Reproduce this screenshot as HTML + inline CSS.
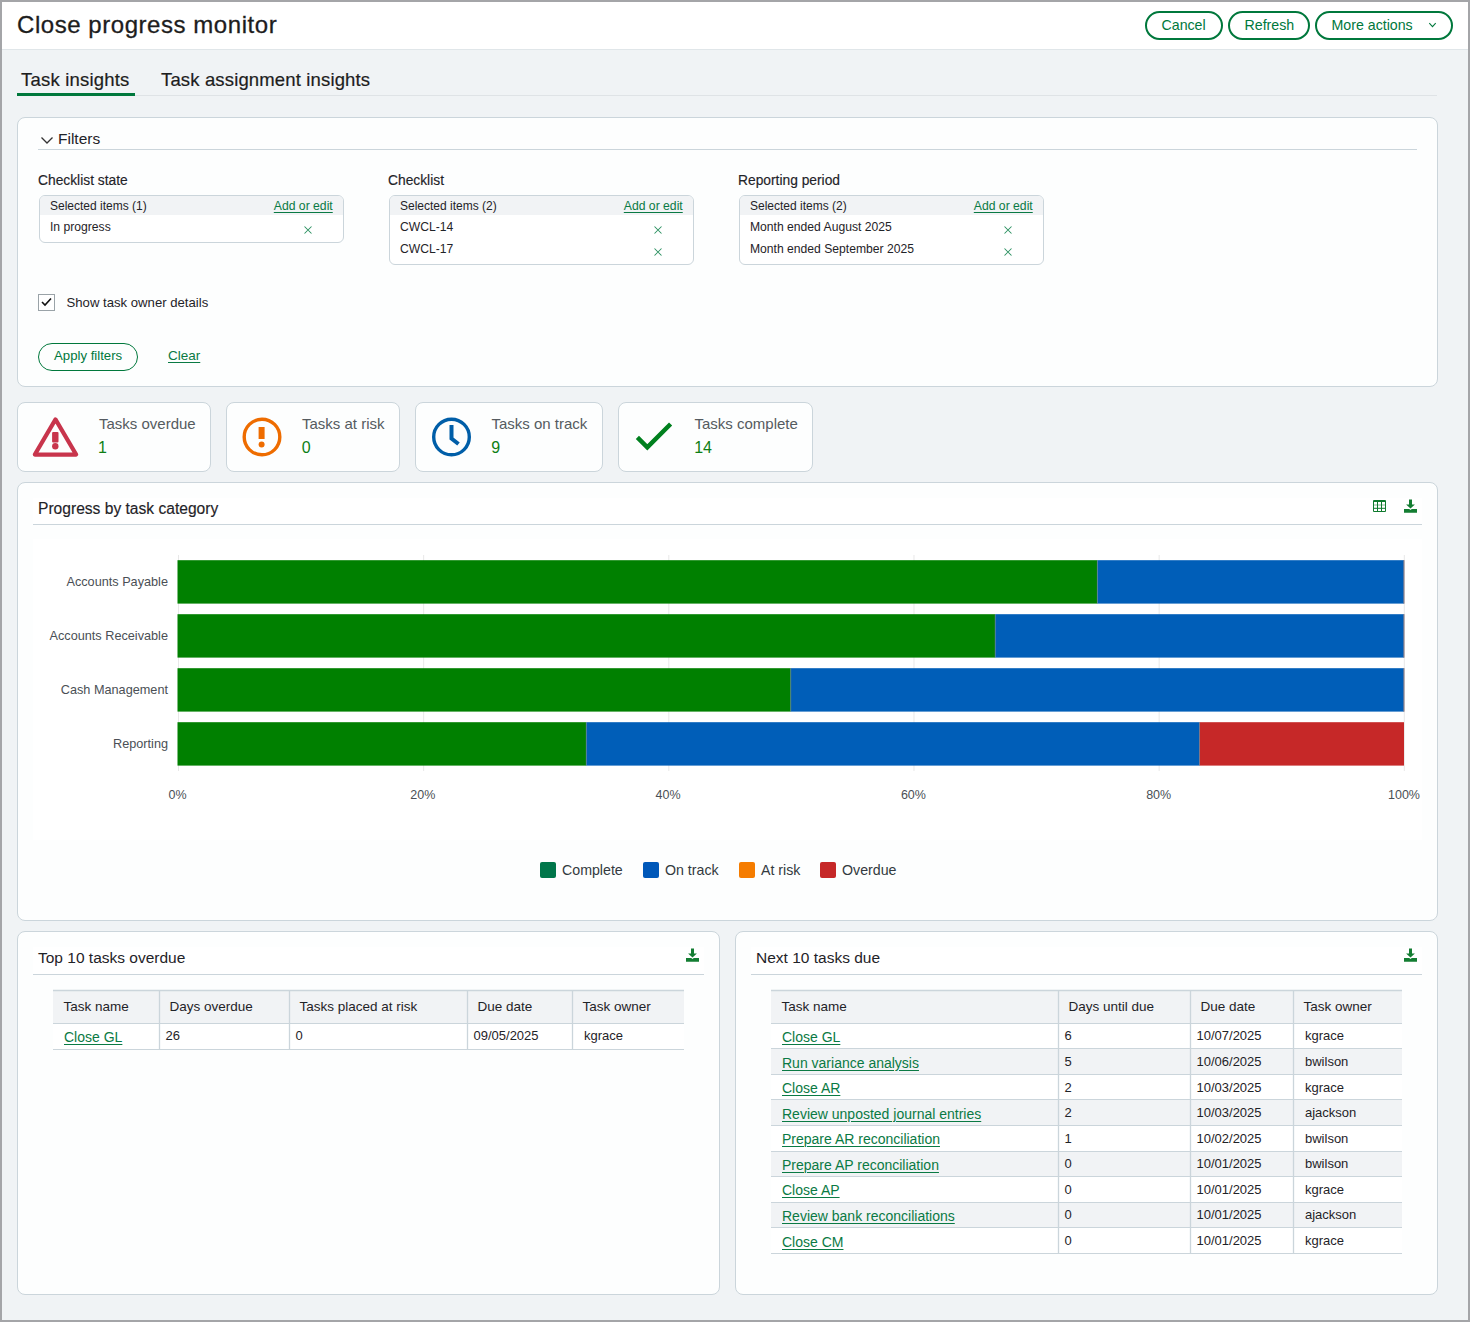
<!DOCTYPE html>
<html><head><meta charset="utf-8"><style>
*{box-sizing:border-box;margin:0;padding:0}
html,body{width:1470px;height:1322px;overflow:hidden}
body{font-family:"Liberation Sans",sans-serif;background:#f0f3f5;position:relative;color:#1f2328}
#frame{position:absolute;left:0;top:0;width:1470px;height:1322px;border:2px solid #a4a5a8;z-index:50}
.a{position:absolute}
.t{position:absolute;white-space:nowrap;line-height:1}
.u{position:absolute;white-space:nowrap;line-height:1;text-decoration:underline;text-underline-offset:2px;text-decoration-thickness:1px}
svg{position:absolute;overflow:visible}
</style></head><body>
<div id="frame"></div>
<div class="a" style="left:2px;top:2px;width:1466px;height:48px;background:#fff;border-bottom:1px solid #e0e6e9"></div>
<div class="t" style="left:17px;top:12.88px;font-size:24px;color:#1d1d1d;letter-spacing:0.55px;-webkit-text-stroke:0.3px #1d1d1d">Close progress monitor</div>
<div class="a" style="left:1145px;top:11px;width:78px;height:29px;border:2px solid #00783c;border-radius:15px;background:#fff"></div>
<div class="t" style="left:1161.5px;top:18.28px;font-size:14.2px;color:#00783c;">Cancel</div>
<div class="a" style="left:1228px;top:11px;width:82px;height:29px;border:2px solid #00783c;border-radius:15px;background:#fff"></div>
<div class="t" style="left:1244.5px;top:18.28px;font-size:14.2px;color:#00783c;">Refresh</div>
<div class="a" style="left:1315px;top:11px;width:138px;height:29px;border:2px solid #00783c;border-radius:15px;background:#fff"></div>
<div class="t" style="left:1331.5px;top:18.28px;font-size:14.2px;color:#00783c;">More actions</div>
<svg style="left:1428px;top:22px" width="9" height="6"><polyline points="1.3,1.2 4.5,4.6 7.7,1.2" fill="none" stroke="#00783c" stroke-width="1.1"/></svg>
<div class="t" style="left:21px;top:70.84px;font-size:18.5px;color:#1d1d1d;letter-spacing:0.2px;-webkit-text-stroke:0.2px #1d1d1d">Task insights</div>
<div class="t" style="left:161px;top:70.84px;font-size:18.5px;color:#1d1d1d;letter-spacing:0.15px;-webkit-text-stroke:0.2px #1d1d1d">Task assignment insights</div>
<div class="a" style="left:17px;top:95px;width:1420px;height:1px;background:#dfe3e6"></div>
<div class="a" style="left:17px;top:93px;width:118px;height:3px;background:#00783c"></div>
<div class="a" style="left:17px;top:117px;width:1421px;height:270px;background:#fdfefe;border:1px solid #cbd5db;border-radius:8px"></div>
<svg style="left:40px;top:136px" width="14" height="9"><polyline points="1.5,1.5 7,7 12.5,1.5" fill="none" stroke="#333" stroke-width="1.3"/></svg>
<div class="t" style="left:58px;top:130.78px;font-size:15.5px;color:#1f2328;">Filters</div>
<div class="a" style="left:38px;top:149px;width:1379px;height:1px;background:#cbd5db"></div>
<div class="t" style="left:38px;top:173.92px;font-size:13.8px;color:#1f2328;-webkit-text-stroke:0.15px #1f2328">Checklist state</div>
<div class="a" style="left:39px;top:195px;width:305px;height:48px;border:1px solid #cbd5db;border-radius:6px;background:#fff;overflow:hidden"></div>
<div class="a" style="left:40px;top:196px;width:303px;height:19px;background:#f1f3f5;border-radius:5px 5px 0 0"></div>
<div class="t" style="left:50px;top:199.84px;font-size:12px;color:#1f2328;">Selected items (1)</div>
<div class="u" style="left:273.8px;top:199.97px;font-size:12.2px;color:#0a7a44;">Add or edit</div>
<div class="t" style="left:50px;top:220.72px;font-size:12.15px;color:#1f2328;">In progress</div>
<svg style="left:303.5px;top:226.3px" width="8" height="8"><path d="M0.5,0.5 L7.5,7.5 M7.5,0.5 L0.5,7.5" stroke="#2a9060" stroke-width="1.05"/></svg>
<div class="t" style="left:388px;top:173.92px;font-size:13.8px;color:#1f2328;-webkit-text-stroke:0.15px #1f2328">Checklist</div>
<div class="a" style="left:389px;top:195px;width:305px;height:70px;border:1px solid #cbd5db;border-radius:6px;background:#fff;overflow:hidden"></div>
<div class="a" style="left:390px;top:196px;width:303px;height:19px;background:#f1f3f5;border-radius:5px 5px 0 0"></div>
<div class="t" style="left:400px;top:199.84px;font-size:12px;color:#1f2328;">Selected items (2)</div>
<div class="u" style="left:623.8px;top:199.97px;font-size:12.2px;color:#0a7a44;">Add or edit</div>
<div class="t" style="left:400px;top:220.72px;font-size:12.15px;color:#1f2328;">CWCL-14</div>
<svg style="left:653.5px;top:226.3px" width="8" height="8"><path d="M0.5,0.5 L7.5,7.5 M7.5,0.5 L0.5,7.5" stroke="#2a9060" stroke-width="1.05"/></svg>
<div class="t" style="left:400px;top:242.72px;font-size:12.15px;color:#1f2328;">CWCL-17</div>
<svg style="left:653.5px;top:248.4px" width="8" height="8"><path d="M0.5,0.5 L7.5,7.5 M7.5,0.5 L0.5,7.5" stroke="#2a9060" stroke-width="1.05"/></svg>
<div class="t" style="left:738px;top:173.92px;font-size:13.8px;color:#1f2328;-webkit-text-stroke:0.15px #1f2328">Reporting period</div>
<div class="a" style="left:739px;top:195px;width:305px;height:70px;border:1px solid #cbd5db;border-radius:6px;background:#fff;overflow:hidden"></div>
<div class="a" style="left:740px;top:196px;width:303px;height:19px;background:#f1f3f5;border-radius:5px 5px 0 0"></div>
<div class="t" style="left:750px;top:199.84px;font-size:12px;color:#1f2328;">Selected items (2)</div>
<div class="u" style="left:973.8px;top:199.97px;font-size:12.2px;color:#0a7a44;">Add or edit</div>
<div class="t" style="left:750px;top:220.72px;font-size:12.15px;color:#1f2328;">Month ended August 2025</div>
<svg style="left:1003.5px;top:226.3px" width="8" height="8"><path d="M0.5,0.5 L7.5,7.5 M7.5,0.5 L0.5,7.5" stroke="#2a9060" stroke-width="1.05"/></svg>
<div class="t" style="left:750px;top:242.72px;font-size:12.15px;color:#1f2328;">Month ended September 2025</div>
<svg style="left:1003.5px;top:248.4px" width="8" height="8"><path d="M0.5,0.5 L7.5,7.5 M7.5,0.5 L0.5,7.5" stroke="#2a9060" stroke-width="1.05"/></svg>
<div class="a" style="left:38px;top:294px;width:17px;height:17px;border:1px solid #9aa3a8;background:#fff"></div>
<svg style="left:41px;top:297px" width="11" height="10"><polyline points="1,5 4,8 10,1.5" fill="none" stroke="#111" stroke-width="1.6"/></svg>
<div class="t" style="left:66.5px;top:295.67px;font-size:13.15px;color:#1f2328;">Show task owner details</div>
<div class="a" style="left:38px;top:343px;width:100px;height:28px;border:1px solid #00783c;border-radius:14px"></div>
<div class="t" style="left:54px;top:349.33px;font-size:13.2px;color:#00783c;">Apply filters</div>
<div class="u" style="left:168px;top:349.07px;font-size:13.5px;color:#0a7a44;">Clear</div>
<div class="a" style="left:17px;top:402px;width:194px;height:70px;background:#fdfefe;border:1px solid #cbd5db;border-radius:8px"></div>
<div class="t" style="left:99px;top:416.00px;font-size:15px;color:#555b60;">Tasks overdue</div>
<div class="t" style="left:98px;top:440.16px;font-size:16px;color:#0e7f14;">1</div>
<div class="a" style="left:226px;top:402px;width:174px;height:70px;background:#fdfefe;border:1px solid #cbd5db;border-radius:8px"></div>
<div class="t" style="left:302px;top:416.00px;font-size:15px;color:#555b60;">Tasks at risk</div>
<div class="t" style="left:301.7px;top:440.16px;font-size:16px;color:#0e7f14;">0</div>
<div class="a" style="left:415px;top:402px;width:188px;height:70px;background:#fdfefe;border:1px solid #cbd5db;border-radius:8px"></div>
<div class="t" style="left:491.5px;top:416.00px;font-size:15px;color:#555b60;">Tasks on track</div>
<div class="t" style="left:491.2px;top:440.16px;font-size:16px;color:#0e7f14;">9</div>
<div class="a" style="left:618px;top:402px;width:195px;height:70px;background:#fdfefe;border:1px solid #cbd5db;border-radius:8px"></div>
<div class="t" style="left:694.5px;top:416.00px;font-size:15px;color:#555b60;">Tasks complete</div>
<div class="t" style="left:694.2px;top:440.16px;font-size:16px;color:#0e7f14;">14</div>
<svg style="left:0;top:0" width="1" height="1"><path d="M55.5,419.4 L76.2,454.6 L34.8,454.6 Z" fill="none" stroke="#c8354c" stroke-width="4.1" stroke-linejoin="round"/><rect x="52.1" y="432" width="6.4" height="10.6" rx="1" fill="#c8354c"/><circle cx="55.3" cy="446.2" r="3.2" fill="#c8354c"/></svg>
<svg style="left:0;top:0" width="1" height="1"><circle cx="262" cy="437" r="17.8" fill="none" stroke="#ee6c00" stroke-width="3.4"/><rect x="258.6" y="427" width="6" height="12" fill="#ee6c00"/><circle cx="261.6" cy="444.5" r="3" fill="#ee6c00"/></svg>
<svg style="left:0;top:0" width="1" height="1"><circle cx="451.5" cy="437" r="17.8" fill="none" stroke="#005ea8" stroke-width="3.4"/><polyline points="451.5,425 451.5,438.5 458.5,444" fill="none" stroke="#005ea8" stroke-width="4"/></svg>
<svg style="left:0;top:0" width="1" height="1"><polyline points="637.4,437.4 647.3,447.3 670.6,424" fill="none" stroke="#00801e" stroke-width="4.5"/></svg>
<div class="a" style="left:17px;top:482px;width:1421px;height:439px;background:#fdfefe;border:1px solid #cbd5db;border-radius:8px"></div>
<div class="a" style="left:33px;top:498px;width:1389px;height:26px;background:#fff"></div>
<div class="t" style="left:38px;top:500.99px;font-size:15.6px;color:#1f2328;-webkit-text-stroke:0.15px #1f2328">Progress by task category</div>
<div class="a" style="left:33px;top:524px;width:1389px;height:1px;background:#cbd5db"></div>
<div class="a" style="left:33px;top:539px;width:1389px;height:301px;background:#fff"></div>
<svg style="left:1373px;top:500px" width="13" height="12"><g fill="#0f7a2e"><rect x="0.5" y="0" width="12" height="2"/><rect x="0.5" y="11" width="12" height="1"/><rect x="0" y="0.5" width="1" height="11"/><rect x="12" y="0.5" width="1" height="11"/><rect x="4" y="0" width="1" height="12"/><rect x="8" y="0" width="1" height="12"/><rect x="0" y="7.8" width="13" height="1"/></g><rect x="0" y="4.5" width="13" height="1" fill="#0f7a2e" opacity="0.55"/></svg>
<svg style="left:1404px;top:499px" width="13" height="14"><path d="M5,0.5 H8 V5.6 H10.9 L6.5,9.6 L2.1,5.6 H5 Z" fill="#137d32"/><path d="M0,9.9 H5.2 L6.5,10.9 L7.8,9.9 H13 V13.8 H0 Z" fill="#137d32"/></svg>
<svg style="left:0;top:0" width="1" height="1"><line x1="178.5" y1="555" x2="178.5" y2="771" stroke="#e8e8e8" stroke-width="1"/><line x1="423.65999999999997" y1="555" x2="423.65999999999997" y2="771" stroke="#e8e8e8" stroke-width="1"/><line x1="668.8199999999999" y1="555" x2="668.8199999999999" y2="771" stroke="#e8e8e8" stroke-width="1"/><line x1="913.98" y1="555" x2="913.98" y2="771" stroke="#e8e8e8" stroke-width="1"/><line x1="1159.1399999999999" y1="555" x2="1159.1399999999999" y2="771" stroke="#e8e8e8" stroke-width="1"/><line x1="1404.3" y1="555" x2="1404.3" y2="771" stroke="#e8e8e8" stroke-width="1"/><rect x="177.5" y="560.2" width="919.875" height="43.4" fill="#008000"/><rect x="1097.375" y="560.2" width="306.625" height="43.4" fill="#005eb8"/><line x1="1404.0" y1="560.2" x2="1404.0" y2="603.6" stroke="#c98f8f" stroke-width="0.8"/><line x1="1097.375" y1="560.2" x2="1097.375" y2="603.6" stroke="#6b7f8a" stroke-width="0.6"/><line x1="1404.0" y1="560.2" x2="1404.0" y2="603.6" stroke="#6b7f8a" stroke-width="0.6"/><rect x="177.5" y="614.2" width="817.7075500000001" height="43.4" fill="#008000"/><rect x="995.2075500000001" y="614.2" width="408.79245" height="43.4" fill="#005eb8"/><line x1="1404.0" y1="614.2" x2="1404.0" y2="657.6" stroke="#c98f8f" stroke-width="0.8"/><line x1="995.2075500000001" y1="614.2" x2="995.2075500000001" y2="657.6" stroke="#6b7f8a" stroke-width="0.6"/><line x1="1404.0" y1="614.2" x2="1404.0" y2="657.6" stroke="#6b7f8a" stroke-width="0.6"/><rect x="177.5" y="668.2" width="613.25" height="43.4" fill="#008000"/><rect x="790.75" y="668.2" width="613.25" height="43.4" fill="#005eb8"/><line x1="1404.0" y1="668.2" x2="1404.0" y2="711.6" stroke="#c98f8f" stroke-width="0.8"/><line x1="790.75" y1="668.2" x2="790.75" y2="711.6" stroke="#6b7f8a" stroke-width="0.6"/><line x1="1404.0" y1="668.2" x2="1404.0" y2="711.6" stroke="#6b7f8a" stroke-width="0.6"/><rect x="177.5" y="722.2" width="408.79245" height="43.4" fill="#008000"/><rect x="586.2924499999999" y="722.2" width="613.25" height="43.4" fill="#005eb8"/><rect x="1199.54245" y="722.2" width="204.45755000000003" height="43.4" fill="#c62828"/><line x1="586.2924499999999" y1="722.2" x2="586.2924499999999" y2="765.6" stroke="#6b7f8a" stroke-width="0.6"/><line x1="1199.54245" y1="722.2" x2="1199.54245" y2="765.6" stroke="#6b7f8a" stroke-width="0.6"/></svg>
<div class="t" style="right:1302px;top:575.72px;font-size:12.7px;color:#4a4f55">Accounts Payable</div>
<div class="t" style="right:1302px;top:629.72px;font-size:12.7px;color:#4a4f55">Accounts Receivable</div>
<div class="t" style="right:1302px;top:683.72px;font-size:12.7px;color:#4a4f55">Cash Management</div>
<div class="t" style="right:1302px;top:737.72px;font-size:12.7px;color:#4a4f55">Reporting</div>
<div class="t" style="left:137.5px;width:80px;text-align:center;top:788.92px;font-size:12.5px;color:#4a4f55">0%</div>
<div class="t" style="left:382.8px;width:80px;text-align:center;top:788.92px;font-size:12.5px;color:#4a4f55">20%</div>
<div class="t" style="left:628.1px;width:80px;text-align:center;top:788.92px;font-size:12.5px;color:#4a4f55">40%</div>
<div class="t" style="left:873.4000000000001px;width:80px;text-align:center;top:788.92px;font-size:12.5px;color:#4a4f55">60%</div>
<div class="t" style="left:1118.7px;width:80px;text-align:center;top:788.92px;font-size:12.5px;color:#4a4f55">80%</div>
<div class="t" style="left:1364.0px;width:80px;text-align:center;top:788.92px;font-size:12.5px;color:#4a4f55">100%</div>
<div class="a" style="left:540px;top:862px;width:16px;height:16px;background:#00764a;border-radius:2px"></div>
<div class="t" style="left:562px;top:862.88px;font-size:14.2px;color:#333a40;">Complete</div>
<div class="a" style="left:643px;top:862px;width:16px;height:16px;background:#0058b9;border-radius:2px"></div>
<div class="t" style="left:665px;top:862.88px;font-size:14.2px;color:#333a40;">On track</div>
<div class="a" style="left:739px;top:862px;width:16px;height:16px;background:#f57c00;border-radius:2px"></div>
<div class="t" style="left:761px;top:862.88px;font-size:14.2px;color:#333a40;">At risk</div>
<div class="a" style="left:820px;top:862px;width:16px;height:16px;background:#c62828;border-radius:2px"></div>
<div class="t" style="left:842px;top:862.88px;font-size:14.2px;color:#333a40;">Overdue</div>
<div class="a" style="left:17px;top:931px;width:703px;height:364px;background:#fdfefe;border:1px solid #cbd5db;border-radius:8px"></div>
<div class="a" style="left:33px;top:947px;width:671px;height:27px;background:#fff"></div>
<div class="t" style="left:38px;top:949.78px;font-size:15.5px;color:#1f2328;">Top 10 tasks overdue</div>
<div class="a" style="left:33px;top:974px;width:671px;height:1px;background:#cbd5db"></div>
<svg style="left:686px;top:948px" width="13" height="14"><path d="M5,0.5 H8 V5.6 H10.9 L6.5,9.6 L2.1,5.6 H5 Z" fill="#137d32"/><path d="M0,9.9 H5.2 L6.5,10.9 L7.8,9.9 H13 V13.8 H0 Z" fill="#137d32"/></svg>
<div class="a" style="left:735px;top:931px;width:703px;height:364px;background:#fdfefe;border:1px solid #cbd5db;border-radius:8px"></div>
<div class="a" style="left:751px;top:947px;width:671px;height:27px;background:#fff"></div>
<div class="t" style="left:756px;top:949.78px;font-size:15.5px;color:#1f2328;">Next 10 tasks due</div>
<div class="a" style="left:751px;top:974px;width:671px;height:1px;background:#cbd5db"></div>
<svg style="left:1404px;top:948px" width="13" height="14"><path d="M5,0.5 H8 V5.6 H10.9 L6.5,9.6 L2.1,5.6 H5 Z" fill="#137d32"/><path d="M0,9.9 H5.2 L6.5,10.9 L7.8,9.9 H13 V13.8 H0 Z" fill="#137d32"/></svg>
<svg style="left:0;top:0" width="1" height="1"><rect x="53" y="990" width="631" height="33.200000000000045" fill="#f1f3f5"/><rect x="53" y="1023.2" width="631" height="26.3" fill="#ffffff"/><line x1="53" y1="990.5" x2="684" y2="990.5" stroke="#cbd5db" stroke-width="1.3"/><line x1="53" y1="1023.5" x2="684" y2="1023.5" stroke="#cbd5db" stroke-width="1.2"/><line x1="53" y1="1049.5" x2="684" y2="1049.5" stroke="#cbd5db" stroke-width="1.2"/><line x1="159.5" y1="990" x2="159.5" y2="1049.5" stroke="#cbd5db" stroke-width="1.3"/><line x1="289.5" y1="990" x2="289.5" y2="1049.5" stroke="#cbd5db" stroke-width="1.3"/><line x1="467.5" y1="990" x2="467.5" y2="1049.5" stroke="#cbd5db" stroke-width="1.3"/><line x1="572.5" y1="990" x2="572.5" y2="1049.5" stroke="#cbd5db" stroke-width="1.3"/></svg>
<div class="t" style="left:63.5px;top:1000.47px;font-size:13.5px;color:#1f2328;">Task name</div>
<div class="t" style="left:169.5px;top:1000.47px;font-size:13.5px;color:#1f2328;">Days overdue</div>
<div class="t" style="left:299.5px;top:1000.47px;font-size:13.5px;color:#1f2328;">Tasks placed at risk</div>
<div class="t" style="left:477.5px;top:1000.47px;font-size:13.5px;color:#1f2328;">Due date</div>
<div class="t" style="left:582.5px;top:1000.47px;font-size:13.5px;color:#1f2328;">Task owner</div>
<div class="u" style="left:64px;top:1030.05px;font-size:14px;color:#0a7a44;">Close GL</div>
<div class="t" style="left:165.5px;top:1029.40px;font-size:13px;color:#1f2328;">26</div>
<div class="t" style="left:295.5px;top:1029.40px;font-size:13px;color:#1f2328;">0</div>
<div class="t" style="left:473.5px;top:1029.40px;font-size:13px;color:#1f2328;">09/05/2025</div>
<div class="t" style="left:584px;top:1029.40px;font-size:13px;color:#1f2328;">kgrace</div>
<svg style="left:0;top:0" width="1" height="1"><rect x="771" y="990" width="631" height="33.200000000000045" fill="#f1f3f5"/><rect x="771" y="1023.2" width="631" height="25.56" fill="#ffffff"/><rect x="771" y="1048.76" width="631" height="25.56" fill="#f1f3f5"/><rect x="771" y="1074.32" width="631" height="25.56" fill="#ffffff"/><rect x="771" y="1099.88" width="631" height="25.56" fill="#f1f3f5"/><rect x="771" y="1125.44" width="631" height="25.56" fill="#ffffff"/><rect x="771" y="1151.0" width="631" height="25.56" fill="#f1f3f5"/><rect x="771" y="1176.56" width="631" height="25.56" fill="#ffffff"/><rect x="771" y="1202.1200000000001" width="631" height="25.56" fill="#f1f3f5"/><rect x="771" y="1227.68" width="631" height="25.56" fill="#ffffff"/><line x1="771" y1="990.5" x2="1402" y2="990.5" stroke="#cbd5db" stroke-width="1.3"/><line x1="771" y1="1023.5" x2="1402" y2="1023.5" stroke="#cbd5db" stroke-width="1.2"/><line x1="771" y1="1048.5" x2="1402" y2="1048.5" stroke="#cbd5db" stroke-width="1.2"/><line x1="771" y1="1074.5" x2="1402" y2="1074.5" stroke="#cbd5db" stroke-width="1.2"/><line x1="771" y1="1099.5" x2="1402" y2="1099.5" stroke="#cbd5db" stroke-width="1.2"/><line x1="771" y1="1125.5" x2="1402" y2="1125.5" stroke="#cbd5db" stroke-width="1.2"/><line x1="771" y1="1151.5" x2="1402" y2="1151.5" stroke="#cbd5db" stroke-width="1.2"/><line x1="771" y1="1176.5" x2="1402" y2="1176.5" stroke="#cbd5db" stroke-width="1.2"/><line x1="771" y1="1202.5" x2="1402" y2="1202.5" stroke="#cbd5db" stroke-width="1.2"/><line x1="771" y1="1227.5" x2="1402" y2="1227.5" stroke="#cbd5db" stroke-width="1.2"/><line x1="771" y1="1253.5" x2="1402" y2="1253.5" stroke="#cbd5db" stroke-width="1.2"/><line x1="1058.5" y1="990" x2="1058.5" y2="1253.24" stroke="#cbd5db" stroke-width="1.3"/><line x1="1190.5" y1="990" x2="1190.5" y2="1253.24" stroke="#cbd5db" stroke-width="1.3"/><line x1="1293.5" y1="990" x2="1293.5" y2="1253.24" stroke="#cbd5db" stroke-width="1.3"/></svg>
<div class="t" style="left:781.5px;top:1000.47px;font-size:13.5px;color:#1f2328;">Task name</div>
<div class="t" style="left:1068.5px;top:1000.47px;font-size:13.5px;color:#1f2328;">Days until due</div>
<div class="t" style="left:1200.5px;top:1000.47px;font-size:13.5px;color:#1f2328;">Due date</div>
<div class="t" style="left:1303.5px;top:1000.47px;font-size:13.5px;color:#1f2328;">Task owner</div>
<div class="u" style="left:782px;top:1030.05px;font-size:14px;color:#0a7a44;">Close GL</div>
<div class="t" style="left:1064.5px;top:1029.40px;font-size:13px;color:#1f2328;">6</div>
<div class="t" style="left:1196.5px;top:1029.40px;font-size:13px;color:#1f2328;">10/07/2025</div>
<div class="t" style="left:1305px;top:1029.40px;font-size:13px;color:#1f2328;">kgrace</div>
<div class="u" style="left:782px;top:1055.61px;font-size:14px;color:#0a7a44;">Run variance analysis</div>
<div class="t" style="left:1064.5px;top:1054.96px;font-size:13px;color:#1f2328;">5</div>
<div class="t" style="left:1196.5px;top:1054.96px;font-size:13px;color:#1f2328;">10/06/2025</div>
<div class="t" style="left:1305px;top:1054.96px;font-size:13px;color:#1f2328;">bwilson</div>
<div class="u" style="left:782px;top:1081.17px;font-size:14px;color:#0a7a44;">Close AR</div>
<div class="t" style="left:1064.5px;top:1080.52px;font-size:13px;color:#1f2328;">2</div>
<div class="t" style="left:1196.5px;top:1080.52px;font-size:13px;color:#1f2328;">10/03/2025</div>
<div class="t" style="left:1305px;top:1080.52px;font-size:13px;color:#1f2328;">kgrace</div>
<div class="u" style="left:782px;top:1106.73px;font-size:14px;color:#0a7a44;">Review unposted journal entries</div>
<div class="t" style="left:1064.5px;top:1106.08px;font-size:13px;color:#1f2328;">2</div>
<div class="t" style="left:1196.5px;top:1106.08px;font-size:13px;color:#1f2328;">10/03/2025</div>
<div class="t" style="left:1305px;top:1106.08px;font-size:13px;color:#1f2328;">ajackson</div>
<div class="u" style="left:782px;top:1132.29px;font-size:14px;color:#0a7a44;">Prepare AR reconciliation</div>
<div class="t" style="left:1064.5px;top:1131.64px;font-size:13px;color:#1f2328;">1</div>
<div class="t" style="left:1196.5px;top:1131.64px;font-size:13px;color:#1f2328;">10/02/2025</div>
<div class="t" style="left:1305px;top:1131.64px;font-size:13px;color:#1f2328;">bwilson</div>
<div class="u" style="left:782px;top:1157.85px;font-size:14px;color:#0a7a44;">Prepare AP reconciliation</div>
<div class="t" style="left:1064.5px;top:1157.20px;font-size:13px;color:#1f2328;">0</div>
<div class="t" style="left:1196.5px;top:1157.20px;font-size:13px;color:#1f2328;">10/01/2025</div>
<div class="t" style="left:1305px;top:1157.20px;font-size:13px;color:#1f2328;">bwilson</div>
<div class="u" style="left:782px;top:1183.41px;font-size:14px;color:#0a7a44;">Close AP</div>
<div class="t" style="left:1064.5px;top:1182.76px;font-size:13px;color:#1f2328;">0</div>
<div class="t" style="left:1196.5px;top:1182.76px;font-size:13px;color:#1f2328;">10/01/2025</div>
<div class="t" style="left:1305px;top:1182.76px;font-size:13px;color:#1f2328;">kgrace</div>
<div class="u" style="left:782px;top:1208.97px;font-size:14px;color:#0a7a44;">Review bank reconciliations</div>
<div class="t" style="left:1064.5px;top:1208.32px;font-size:13px;color:#1f2328;">0</div>
<div class="t" style="left:1196.5px;top:1208.32px;font-size:13px;color:#1f2328;">10/01/2025</div>
<div class="t" style="left:1305px;top:1208.32px;font-size:13px;color:#1f2328;">ajackson</div>
<div class="u" style="left:782px;top:1234.53px;font-size:14px;color:#0a7a44;">Close CM</div>
<div class="t" style="left:1064.5px;top:1233.88px;font-size:13px;color:#1f2328;">0</div>
<div class="t" style="left:1196.5px;top:1233.88px;font-size:13px;color:#1f2328;">10/01/2025</div>
<div class="t" style="left:1305px;top:1233.88px;font-size:13px;color:#1f2328;">kgrace</div>
</body></html>
